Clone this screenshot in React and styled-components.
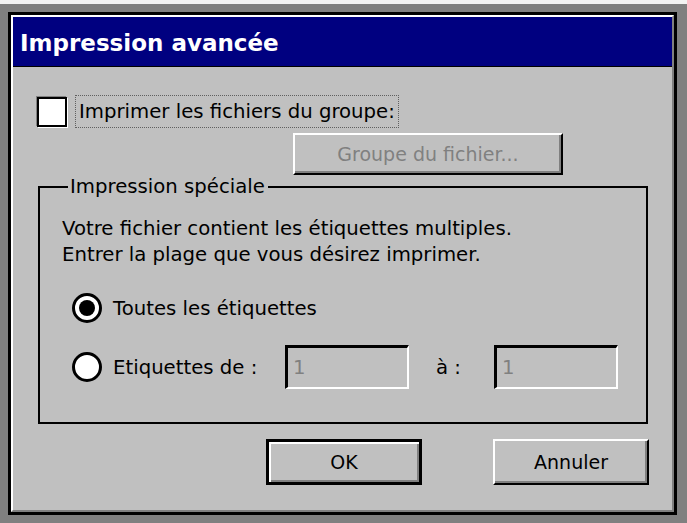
import React from 'react';
import styled, { createGlobalStyle } from 'styled-components';

const GlobalStyle = createGlobalStyle`
  html, body {
    margin: 0;
    padding: 0;
    background: #808080;
  }
  * {
    box-sizing: border-box;
  }
`;

const FONT = `"DejaVu Sans", Verdana, sans-serif`;

const Page = styled.div`
  width: 687px;
  height: 523px;
  border-top: 4px solid #f4f4f4;
  padding: 8px 0 0 8px;
  background: #808080;
  font-family: ${FONT};
`;

const Dialog = styled.div`
  width: 669px;
  height: 503px;
  border: 3px solid #000;
`;

const Frame = styled.div`
  height: 100%;
  display: flex;
  flex-direction: column;
  border-top: 2px solid #fff;
  border-left: 2px solid #fff;
  border-right: 2px solid #808080;
  border-bottom: 2px solid #808080;
  background: #c0c0c0;
`;

const TitleBar = styled.div`
  height: 50px;
  flex-shrink: 0;
  display: flex;
  align-items: center;
  padding: 2px 0 0 7px;
  background: #000080;
  border-bottom: 1px solid #000;
  color: #fff;
  font-size: 23px;
  font-weight: bold;
`;

const Body = styled.div`
  flex: 1;
  display: flex;
  flex-direction: column;
  padding: 0 23px 0 24px;
  font-size: 19.7px;
  color: #000;
`;

const CheckRow = styled.div`
  display: flex;
  align-items: center;
  height: 33px;
  margin-top: 28px;
`;

const CheckBox = styled.span`
  width: 30px;
  height: 30px;
  flex-shrink: 0;
  background: #fff;
  border: 2px solid #000;
  box-shadow: -1px -1px 0 #808080, 1px 1px 0 #fff;
`;

const FocusLabel = styled.span`
  display: flex;
  align-items: center;
  height: 33px;
  margin-left: 8px;
  padding: 0 3px;
  border: 1px dotted #606060;
`;

const Button = styled.button`
  width: ${(p) => p.$w || 156}px;
  height: ${(p) => p.$h || 46}px;
  padding: 0;
  font-family: ${FONT};
  font-size: 19px;
  color: ${(p) => (p.disabled ? '#808080' : '#000')};
  background: #c0c0c0;
  border-style: solid;
  border-width: ${(p) => (p.$default ? '3px' : '2px')};
  border-color: ${(p) => (p.$default ? '#000' : '#fff #000 #000 #fff')};
  box-shadow: ${(p) =>
    p.$default
      ? 'inset 2px 2px 0 #fff, inset -2px -2px 0 #808080'
      : 'inset -2px -2px 0 #808080'};
`;

const GroupButtonRow = styled.div`
  display: flex;
  margin-top: 5px;
  padding-left: 256px;
`;

const GroupBox = styled.fieldset`
  width: 610px;
  margin: 0 0 0 1px;
  padding: 0 0 33px 22px;
  border: 2px solid #000;
  display: flex;
  flex-direction: column;
`;

const Legend = styled.legend`
  margin-left: 6px;
  padding: 0 3px 0 2px;
  line-height: 24px;
  font-size: 19.7px;
`;

const Info = styled.div`
  margin-top: ${(p) => p.$mt || 0}px;
  line-height: 26px;
`;

const RadioRow = styled.div`
  display: flex;
  align-items: center;
  height: ${(p) => p.$h}px;
  margin-top: ${(p) => p.$mt}px;
  padding-left: 10px;
`;

const Radio = styled.span`
  width: 30px;
  height: 30px;
  flex-shrink: 0;
  border-radius: 50%;
  border: 3px solid #000;
  background: #fff;
  display: flex;
  align-items: center;
  justify-content: center;

  &::after {
    content: '';
    width: 16px;
    height: 16px;
    border-radius: 50%;
    background: ${(p) => (p.$checked ? '#000' : 'transparent')};
  }
`;

const RadioLabel = styled.span`
  margin-left: 11px;
  width: ${(p) => (p.$w ? `${p.$w}px` : 'auto')};
  flex-shrink: 0;
`;

const Field = styled.div`
  width: 124px;
  height: 44px;
  flex-shrink: 0;
  display: flex;
  align-items: center;
  padding-left: 5px;
  color: #808080;
  background: #c0c0c0;
  border-style: solid;
  border-width: 3px 2px 2px 3px;
  border-color: #000 #fff #fff #000;
`;

const ToLabel = styled.span`
  width: 58px;
  margin-left: 27px;
  flex-shrink: 0;
`;

const Footer = styled.div`
  display: flex;
  justify-content: flex-end;
  gap: 71px;
  margin-top: 15px;
`;

export default function App() {
  return (
    <Page>
      <GlobalStyle />
      <Dialog>
        <Frame>
          <TitleBar>Impression avancée</TitleBar>
          <Body>
            <CheckRow>
              <CheckBox />
              <FocusLabel>Imprimer les fichiers du groupe:</FocusLabel>
            </CheckRow>
            <GroupButtonRow>
              <Button $w={270} $h={42} disabled>
                Groupe du fichier...
              </Button>
            </GroupButtonRow>
            <GroupBox>
              <Legend>Impression spéciale</Legend>
              <Info $mt={17}>Votre fichier contient les étiquettes multiples.</Info>
              <Info>Entrer la plage que vous désirez imprimer.</Info>
              <RadioRow $h={32} $mt={24}>
                <Radio $checked />
                <RadioLabel>Toutes les étiquettes</RadioLabel>
              </RadioRow>
              <RadioRow $h={44} $mt={21}>
                <Radio />
                <RadioLabel $w={172}>Etiquettes de :</RadioLabel>
                <Field>1</Field>
                <ToLabel>à :</ToLabel>
                <Field>1</Field>
              </RadioRow>
            </GroupBox>
            <Footer>
              <Button $default>OK</Button>
              <Button>Annuler</Button>
            </Footer>
          </Body>
        </Frame>
      </Dialog>
    </Page>
  );
}
